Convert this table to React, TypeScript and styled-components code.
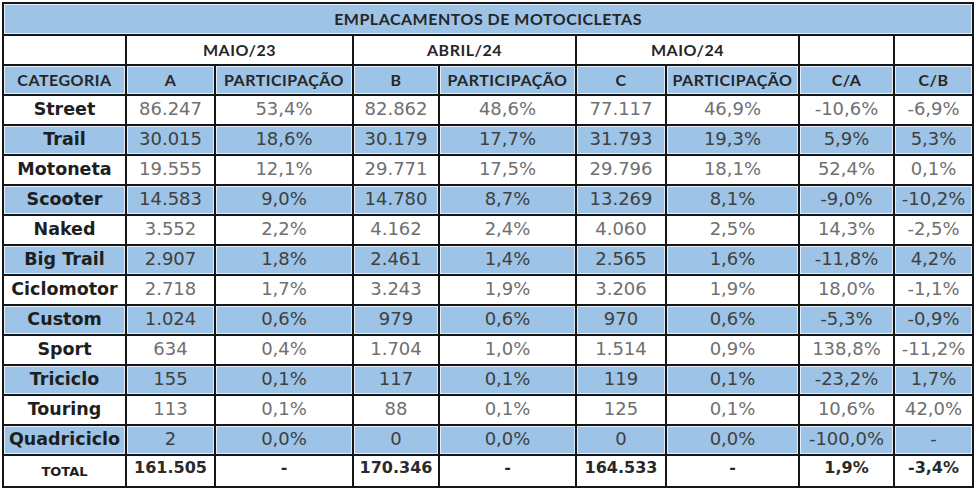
import React from "react";
import styled, { createGlobalStyle } from "styled-components";

const Global = createGlobalStyle`
  html, body { margin: 0; padding: 0; background: #ffffff; }
  #root { padding: 2px 0 0 2px; }
`;

const Table = styled.table`
  border-collapse: collapse;
  table-layout: fixed;
  width: 970px;
  font-family: "DejaVu Sans", "Liberation Sans", sans-serif;
`;

const Row = styled.tr<{ $h: number }>`
  height: ${(p) => p.$h}px;
`;

const Cell = styled.td<{ $blue?: boolean }>`
  border: 2px solid #161616;
  padding: 0 2px;
  text-align: center;
  vertical-align: middle;
  white-space: nowrap;
  overflow: hidden;
  background: ${(p) => (p.$blue ? "#9dc3e6" : "#ffffff")};
  box-shadow: ${(p) => (p.$blue ? "inset 0 0 0 1px #e3eefa" : "none")};
`;

const HeadCell = styled(Cell)`
  font-family: "Lato", "Open Sans", sans-serif;
  font-weight: 700;
  font-size: 16px;
  color: #262626;
  letter-spacing: 0.5px;
  padding-bottom: 1px;
`;

const CatCell = styled(Cell)`
  font-weight: 700;
  font-size: 17.5px;
  color: #1e1e1e;
  padding-bottom: 3px;
`;

const NumCell = styled(Cell)`
  font-size: 18px;
  color: ${(p) => (p.$blue ? "#404040" : "#707070")};
  padding-bottom: 3px;
`;

const TotalLabel = styled(Cell)`
  font-weight: 700;
  font-size: 13px;
  color: #1e1e1e;
`;

const TotalCell = styled(Cell)`
  font-weight: 700;
  font-size: 16px;
  color: #2a2a2a;
  padding-bottom: 8px;
`;

const widths = [123, 89, 138, 86, 137, 90, 133, 95, 79];

type R = [string, string, string, string, string, string, string, string, string];

const rows: R[] = [
  ["Street", "86.247", "53,4%", "82.862", "48,6%", "77.117", "46,9%", "-10,6%", "-6,9%"],
  ["Trail", "30.015", "18,6%", "30.179", "17,7%", "31.793", "19,3%", "5,9%", "5,3%"],
  ["Motoneta", "19.555", "12,1%", "29.771", "17,5%", "29.796", "18,1%", "52,4%", "0,1%"],
  ["Scooter", "14.583", "9,0%", "14.780", "8,7%", "13.269", "8,1%", "-9,0%", "-10,2%"],
  ["Naked", "3.552", "2,2%", "4.162", "2,4%", "4.060", "2,5%", "14,3%", "-2,5%"],
  ["Big Trail", "2.907", "1,8%", "2.461", "1,4%", "2.565", "1,6%", "-11,8%", "4,2%"],
  ["Ciclomotor", "2.718", "1,7%", "3.243", "1,9%", "3.206", "1,9%", "18,0%", "-1,1%"],
  ["Custom", "1.024", "0,6%", "979", "0,6%", "970", "0,6%", "-5,3%", "-0,9%"],
  ["Sport", "634", "0,4%", "1.704", "1,0%", "1.514", "0,9%", "138,8%", "-11,2%"],
  ["Triciclo", "155", "0,1%", "117", "0,1%", "119", "0,1%", "-23,2%", "1,7%"],
  ["Touring", "113", "0,1%", "88", "0,1%", "125", "0,1%", "10,6%", "42,0%"],
  ["Quadriciclo", "2", "0,0%", "0", "0,0%", "0", "0,0%", "-100,0%", "-"],
];

const total: R = ["TOTAL", "161.505", "-", "170.346", "-", "164.533", "-", "1,9%", "-3,4%"];

const subHeads = ["CATEGORIA", "A", "PARTICIPAÇÃO", "B", "PARTICIPAÇÃO", "C", "PARTICIPAÇÃO", "C/A", "C/B"];

export default function App() {
  return (
    <>
      <Global />
      <Table>
        <colgroup>
          {widths.map((w, i) => (
            <col key={i} style={{ width: w }} />
          ))}
        </colgroup>
        <tbody>
          <Row $h={32}>
            <HeadCell $blue colSpan={9}>EMPLACAMENTOS DE MOTOCICLETAS</HeadCell>
          </Row>
          <Row $h={30}>
            <HeadCell />
            <HeadCell colSpan={2}>MAIO/23</HeadCell>
            <HeadCell colSpan={2}>ABRIL/24</HeadCell>
            <HeadCell colSpan={2}>MAIO/24</HeadCell>
            <HeadCell />
            <HeadCell />
          </Row>
          <Row $h={30}>
            {subHeads.map((h, i) => (
              <HeadCell $blue key={i}>{h}</HeadCell>
            ))}
          </Row>
          {rows.map((r, ri) => {
            const blue = ri % 2 === 1;
            return (
              <Row $h={30} key={ri}>
                <CatCell $blue={blue}>{r[0]}</CatCell>
                {r.slice(1).map((v, ci) => (
                  <NumCell $blue={blue} key={ci}>{v}</NumCell>
                ))}
              </Row>
            );
          })}
          <Row $h={32}>
            <TotalLabel>{total[0]}</TotalLabel>
            {total.slice(1).map((v, ci) => (
              <TotalCell key={ci}>{v}</TotalCell>
            ))}
          </Row>
        </tbody>
      </Table>
    </>
  );
}
